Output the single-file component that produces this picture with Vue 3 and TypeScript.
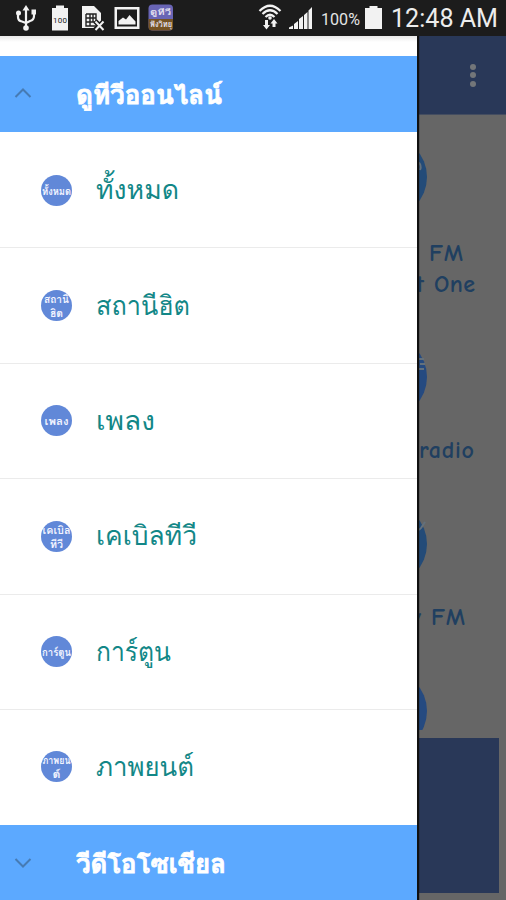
<script setup lang="ts">
interface Category {
  label: string
  width: number
  badge: { text: string; width: number }[]
}

interface Station {
  lines: { text: string; x: number; y: number; width: number }[]
  mark?: string
  size: 'tall' | 'normal' | 'short'
}

const categories: Category[] = [
  { label: 'ทั้งหมด', width: 83, badge: [{ text: 'ทั้งหมด', width: 29 }] },
  { label: 'สถานีฮิต', width: 94, badge: [{ text: 'สถานี', width: 25 }, { text: 'ฮิต', width: 13 }] },
  { label: 'เพลง', width: 59, badge: [{ text: 'เพลง', width: 24 }] },
  { label: 'เคเบิลทีวี', width: 101, badge: [{ text: 'เคเบิล', width: 28 }, { text: 'ทีวี', width: 13 }] },
  { label: 'การ์ตูน', width: 75, badge: [{ text: 'การ์ตูน', width: 29 }] },
  { label: 'ภาพยนต์', width: 98, badge: [{ text: 'ภาพยน', width: 28 }, { text: 'ต์', width: 8 }] },
]

const stations: Station[] = [
  {
    size: 'tall',
    mark: 'M72 26 Q76 29 74 34',
    lines: [
      { text: 'FM', x: 83, y: 125, width: 34 },
      { text: 't', x: 70, y: 156, width: 8 },
      { text: 'One', x: 88, y: 156, width: 41 },
    ],
  },
  {
    size: 'normal',
    mark: 'M69 23 H78 M74 28 H79 M73 33 H78',
    lines: [{ text: 'radio', x: 73, y: 122, width: 55 }],
  },
  {
    size: 'normal',
    mark: 'M79 19 L75 25 Q72 29 68 26',
    lines: [
      { text: 'y', x: 64, y: 122, width: 11 },
      { text: 'FM', x: 85, y: 122, width: 34 },
    ],
  },
  { size: 'short', lines: [] },
]
</script>

<template>
  <div class="screen">
    <header class="status">
      <svg class="status-icons" width="506" height="36" viewBox="0 0 506 36">
        <g fill="none" stroke="#f2f2f2" stroke-width="2.2">
          <path d="M26 8 V28 M18 12 V17 Q18 21 22 21.500 L26 23 L30 21 Q34 20 34 16 V12" />
        </g>
        <g fill="#f2f2f2">
          <path d="M22.500 10.500 L26 5 L29.500 10.500 Z" />
          <circle cx="26" cy="28" r="2.800" />
          <circle cx="18.500" cy="13" r="2.500" />
          <rect x="31.500" y="9.500" width="4.500" height="5" />
          <path d="M52 8 H56 V5.500 H64 V8 H68 V30.500 H52 Z" />
          <path d="M82 6 H94 L101 13 V28 H82 Z" />
          <path fill-rule="evenodd" d="M114.500 7 H139.500 V29 H114.500 Z M117 9.500 V26.500 H137 V9.500 Z" />
          <path d="M118.500 24.500 V21 L123 17.500 L126 19.500 L129.500 15 L135.500 21.500 V24.500 Z" />
        </g>
        <text x="53" y="22.500" class="tiny" textLength="14">100</text>
        <path d="M86 14 V26 H96 M86 14 H96 V23 M86 18 H96 M86 22 H96 M90 14 V26 M93 14 V22" fill="none" stroke="#222" stroke-width="1.400" />
        <path d="M95 21 L104 30 M104 21 L95 30" stroke="#1c1c1c" stroke-width="5" />
        <path d="M95.500 21.500 L103.500 30 M103.500 21.500 L95.500 30" stroke="#f2f2f2" stroke-width="2" />
        <rect x="148.500" y="4.500" width="24.500" height="26" rx="4" fill="#6965b5" />
        <path d="M148.500 19 H173 V27 Q173 30.500 169 30.500 H152.500 Q148.500 30.500 148.500 27 Z" fill="#755323" />
        <text x="150" y="15" class="app-text" textLength="21" lengthAdjust="spacingAndGlyphs">ดูทีวี</text>
        <text x="150" y="27" class="app-text" textLength="22" lengthAdjust="spacingAndGlyphs">ฟังวิทยุ</text>
        <g fill="none" stroke="#f2f2f2" stroke-width="2.200">
          <path d="M259.500 11 Q270 0.500 280.500 11" />
          <path d="M262.500 14 Q270 6.500 277.500 14" />
          <path d="M265.500 17 Q270 12.500 274.500 17" />
        </g>
        <g fill="#f2f2f2">
          <circle cx="270" cy="18" r="1.800" />
          <path d="M265 20 H268 V25 H270 L266.500 29.500 L263 25 H265 Z" />
          <path d="M272.500 27 H275.500 V23.500 H277.500 L274 19 L270.500 23.500 H272.500 Z" />
          <path d="M289 29 V27.500 L293 25.500 V29 Z M294 24 L298 21 V29 H294 Z M299 19 L303 16 V29 H299 Z M304 15 L307.500 12 V29 H304 Z M308.500 10.500 L312 7 V29 H308.500 Z" />
          <path d="M365 8 H369.500 V6 H377.500 V8 H382 V29 H365 Z" />
        </g>
        <text x="321" y="25" class="percent" textLength="39" lengthAdjust="spacingAndGlyphs">100%</text>
        <text x="391" y="27" class="clock" textLength="107" lengthAdjust="spacingAndGlyphs">12:48 AM</text>
      </svg>
    </header>

    <div class="body">
      <main class="page">
        <div class="app-bar">
          <span class="dot"></span>
          <span class="dot"></span>
          <span class="dot"></span>
        </div>
        <div class="stations">
          <svg
            v-for="(station, i) in stations"
            :key="i"
            class="station"
            :class="station.size"
            width="160"
          >
            <circle cx="40" cy="41" r="41" :fill="i % 2 ? '#254a80' : '#234b78'" />
            <path v-if="station.mark" :d="station.mark" class="mark" />
            <text
              v-for="line in station.lines"
              :key="line.text"
              :x="line.x"
              :y="line.y"
              :textLength="line.width"
              class="station-text"
            >{{ line.text }}</text>
          </svg>
        </div>
        <div class="banner"></div>
      </main>

      <aside class="drawer">
        <div class="group open">
          <svg class="chevron" width="18" height="12" viewBox="0 0 18 12"><path d="M1.500 10 L9 2.500 L16.500 10" /></svg>
          <svg class="group-title" width="170" height="60">
            <text x="0" y="39.500" textLength="146" lengthAdjust="spacingAndGlyphs">ดูทีวีออนไลน์</text>
          </svg>
        </div>
        <ul class="list">
          <li v-for="item in categories" :key="item.label" class="row">
            <svg class="badge" width="31" height="31">
              <text
                v-for="(part, i) in item.badge"
                :key="part.text"
                x="15.500"
                :y="item.badge.length === 1 ? 19.500 : 12.500 + i * 14.500"
                text-anchor="middle"
                :textLength="part.width"
                lengthAdjust="spacingAndGlyphs"
              >{{ part.text }}</text>
            </svg>
            <svg class="label" width="120" height="60">
              <text x="0" y="39" :textLength="item.width" lengthAdjust="spacingAndGlyphs">{{ item.label }}</text>
            </svg>
          </li>
        </ul>
        <div class="group">
          <svg class="chevron" width="18" height="12" viewBox="0 0 18 12"><path d="M1.500 2 L9 9.500 L16.500 2" /></svg>
          <svg class="group-title" width="170" height="60">
            <text x="0" y="39.500" textLength="150" lengthAdjust="spacingAndGlyphs">วีดีโอโซเชียล</text>
          </svg>
        </div>
      </aside>
    </div>
  </div>
</template>

<style>
body {
  margin: 0;
  background: #666;
}
</style>

<style scoped>
.screen {
  width: 506px;
  height: 900px;
  overflow: hidden;
  display: flex;
  flex-direction: column;
  font-family: Roboto, 'Droid Sans Thai', Waree, Loma, 'Noto Sans Thai Looped', Garuda, 'Noto Sans Thai', sans-serif;
}
.status {
  height: 36px;
  flex: none;
  background: #1c1c1c;
}
.status-icons {
  display: block;
}
.tiny {
  font-size: 8px;
  fill: #222;
}
.app-text {
  font-size: 8px;
  font-weight: 700;
  fill: #e4e0ee;
}
.percent {
  font-size: 17px;
  fill: #e4e4e4;
}
.clock {
  font-size: 25.5px;
  fill: #ededed;
}
.body {
  position: relative;
  height: 864px;
}
.page {
  height: 100%;
  display: flex;
  flex-direction: column;
  background: #666;
}
.app-bar {
  height: 79px;
  flex: none;
  box-sizing: border-box;
  padding-right: 30px;
  display: flex;
  flex-direction: column;
  align-items: flex-end;
  justify-content: center;
  gap: 2.500px;
  background: #293858;
  border-bottom: 1px solid #444d60;
}
.dot {
  width: 6px;
  height: 6px;
  border-radius: 50%;
  background: #737679;
}
.stations {
  height: 623px;
  flex: none;
  box-sizing: border-box;
  padding: 21px 0 0 346px;
  display: flex;
  flex-direction: column;
}
.station {
  display: block;
  flex: none;
  overflow: hidden;
}
.tall {
  height: 200px;
}
.normal {
  height: 167px;
}
.short {
  height: 60px;
}
.mark {
  fill: none;
  stroke: #64717c;
  stroke-width: 2;
}
.station-text {
  font-family: 'Comic Sans MS', 'Comic Neue', 'Open Sans', sans-serif;
  font-size: 24px;
  font-weight: 600;
  fill: #203f60;
}
.banner {
  width: 499px;
  height: 155px;
  background: #293858;
}
.drawer {
  position: absolute;
  top: 0;
  left: 0;
  width: 417px;
  height: 864px;
  box-sizing: border-box;
  padding-top: 20px;
  background: linear-gradient(#e9e9e9, #fff 6px);
  box-shadow: 1px 0 1px 1px #111;
  clip-path: inset(0 -4px 0 0);
}
.group {
  height: 76px;
  display: flex;
  align-items: center;
  background: #5ca9ff;
}
.chevron {
  margin-left: 14px;
  fill: none;
  stroke: #467bb4;
  stroke-width: 2;
}
.open .chevron {
  margin-bottom: 2px;
}
.group-title {
  margin-left: 43.500px;
  font-size: 26px;
  font-weight: 700;
  fill: #fff;
  stroke: #fff;
  stroke-width: 0.8;
}
.list {
  margin: 0;
  padding: 1px 0 0;
  list-style: none;
}
.row {
  height: 115.400px;
  box-sizing: border-box;
  padding: 0 0 0 41px;
  display: flex;
  align-items: center;
  border-bottom: 1px solid #ebebeb;
}
.row:last-child {
  height: 115px;
  border-bottom-color: transparent;
}
.badge {
  flex: none;
  border-radius: 50%;
  overflow: hidden;
  background: #6188d8;
  font-size: 10.5px;
  font-weight: 700;
  fill: #f2f4ff;
}
.label {
  margin-left: 23.500px;
  font-size: 27px;
  fill: #128787;
}
</style>
